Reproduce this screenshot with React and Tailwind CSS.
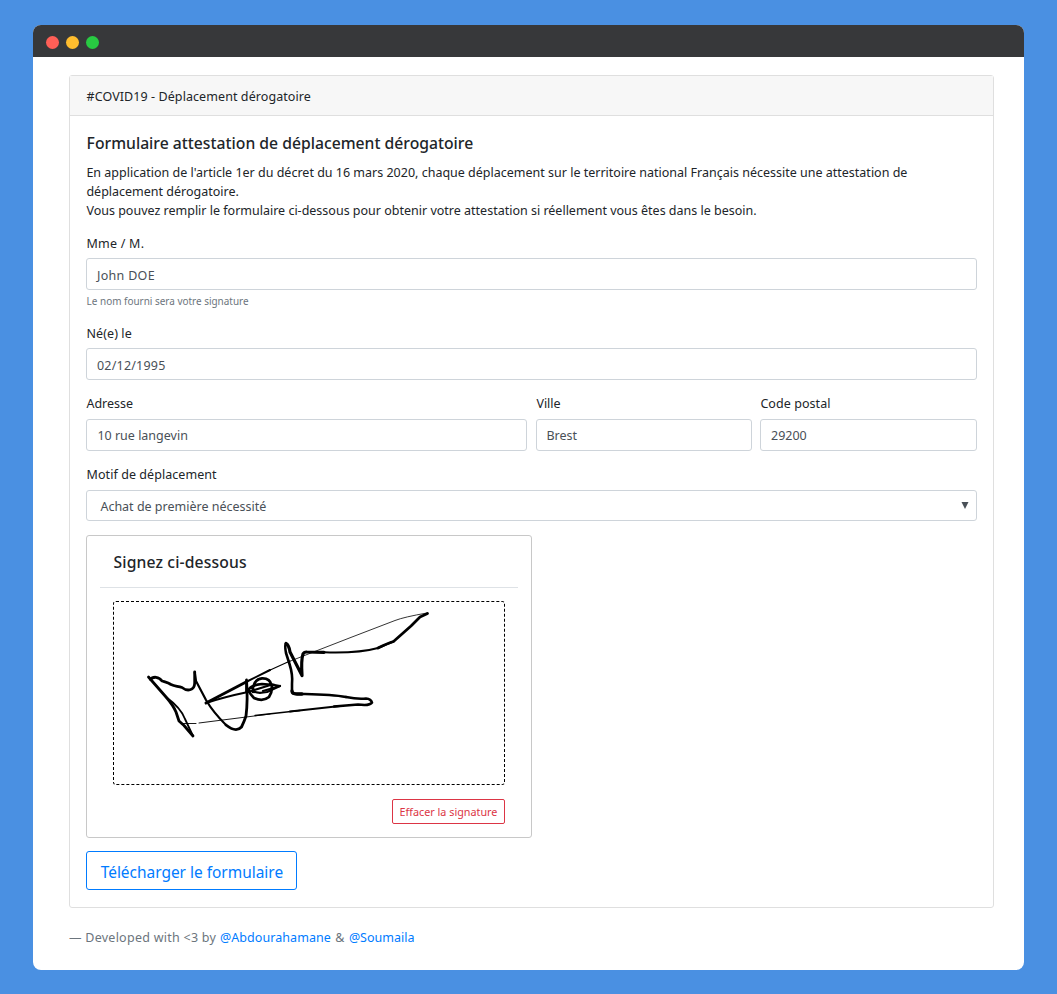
function Field({ label, value, hint, className = "", labelClass = "", valueClass = "" }) {
  return (
    <div className={className}>
      <label className={"block h-[19px] pl-[0.4px] leading-[19px] " + labelClass}>{label}</label>
      <div className="mt-[6px] flex h-8 items-center rounded-[3px] border border-[#ced4da] px-[10px] text-[#495057]">
        <span className={valueClass}>{value}</span>
      </div>
      {hint && <small className="mt-[3px] block h-4 pl-[0.6px] text-[9.950px] leading-4 text-[#6c757d]">{hint}</small>}
    </div>
  );
}

function Signature() {
  return (
    <svg className="block h-full w-full" viewBox="114 602 390 182" fill="none" stroke="#000" strokeLinecap="round" strokeLinejoin="round">
      <g strokeWidth="2.600">
        <path d="M150.500 679.500Q152 677 156 677.300Q160 677.800 162 681C165 682 168 682.500 171 684.500C175 686.500 178 686 182 687.500C187 691.500 194.500 691 194.700 683V672" strokeWidth="2.800" />
        <path d="M148.500 677L166 697Q173 705 176 712L179 721L184 725.500L193 736" strokeWidth="2.800" />
        <path d="M194.700 672L196 681L206 700Q213 712 226 725" strokeWidth="2.200" />
        <path d="M226 725Q236 733 241.500 727Q244 722 246 716Q248 700 246.500 680V692" strokeWidth="2.800" />
        <path d="M206 703L247 681.500" strokeWidth="2.900" />
        <path d="M206 703Q224 697 248 692L272 684.500L280 686L263 691" strokeWidth="2.200" />
        <path d="M253 692V687Q255 679 262 678.300Q270 678 271.500 685Q273 691 269 697Q263 702 254 698Q248 692 249 689Q252 685 262 684L274 685" strokeWidth="2.700" />
        <path d="M253 691Q257 694 267 692L280 686" strokeWidth="2.200" />
        <path d="M286 643.500Q284.500 645 286 653L289.500 664Q293 675 292 684V691Q292 694 297 694L305 694Q333 694.500 346 697" />
        <path d="M292 691Q292 694 297 694L302 694" strokeWidth="3.300" />
        <path d="M346 697Q358 699.500 366 698.500Q371 699 372 702.500Q370 706 358 704.500L334 706.500" />
        <path d="M286 643.500Q289 645 290 652L302 675.500Q301 660 303 654Q304 651.800 307 652L324 652.300" strokeWidth="3.200" />
        <path d="M378 648Q388 643 393.500 641.500L411 626L420 617L427.500 613.500" strokeWidth="2.800" />
      </g>
      <path d="M324 652.300Q358 653.500 378 648L393.500 641.500" strokeWidth="1.900" />
      <path d="M166 697Q181 708 185 719L193 736" strokeWidth="1.800" />
      <path d="M247 681.500L270 670" strokeWidth="2" />
      <path d="M268 671L290 661" strokeWidth="1.200" />
      <path d="M288 662L316 651L352 637L395 620.500Q404 617 427 613" strokeWidth=".8" />
      <path d="M182 723.500H196M199 723L270 714" strokeWidth=".9" />
      <path d="M255 715.500L300 710.500" strokeWidth="1.300" />
      <path d="M290 711.500L340 706" strokeWidth="2" />
    </svg>
  );
}

export default function App() {
  return (
    <div className="h-[994px] bg-[#4a90e2] px-[33px] pt-[25px] font-['Noto_Sans',sans-serif] text-[12.500px] text-[#212529]">
      <main className="h-[945px] overflow-hidden rounded-[8px] bg-white">
        <div className="flex h-8 items-center gap-[7px] bg-[#37383a] pt-[2px] pl-[13.400px]">
          <i className="size-[13px] rounded-full bg-[#ff5f57]" />
          <i className="size-[13px] rounded-full bg-[#ffbd2e]" />
          <i className="size-[13px] rounded-full bg-[#28ca42]" />
        </div>
        <div className="pt-[18px] pr-[30px] pl-9">
          <section className="h-[833px] w-[925px] rounded-[3px] border border-[#dfdfdf]">
            <header className="flex h-10 items-center border-b border-[#dfdfdf] bg-[#f7f7f7] pt-[3px] pl-[16.600px] tracking-[0.08px]">#COVID19 - Déplacement dérogatoire</header>
            <div className="px-4 pt-[15px]">
              <h1 className="h-6 pl-[0.6px] text-[15.730px] leading-6 font-medium">Formulaire attestation de déplacement dérogatoire</h1>
              <p className="mt-2 pl-[0.4px] leading-[19px] whitespace-nowrap">
                En application de l'article 1er du décret du 16 mars 2020, chaque déplacement sur le territoire national Français nécessite une attestation de<br />
                déplacement dérogatoire.<br />
                Vous pouvez remplir le formulaire ci-dessous pour obtenir votre attestation si réellement vous êtes dans le besoin.
              </p>
              <Field className="mt-[14px] -mb-px" label="Mme / M." value="John DOE" hint="Le nom fourni sera votre signature" labelClass="tracking-[0.25px] -mb-px" valueClass="tracking-[0.3px] pt-[4px]" />
              <Field className="mt-4 -mb-px" label="Né(e) le" value="02/12/1995" labelClass="tracking-[0.1px] -mb-px" valueClass="tracking-[0.2px] pt-[4px]" />
              <div className="mt-[15px] flex">
                <Field className="w-[441px]" label="Adresse" value="10 rue langevin" valueClass="pt-[2px] pl-[0.4px]" />
                <Field className="ml-[9px] w-[216px]" label="Ville" value="Brest" valueClass="pt-[2px] -ml-[0.6px]" />
                <Field className="ml-2 w-[217px]" label="Code postal" value="29200" labelClass="tracking-[0.06px]" valueClass="pt-[2px]" />
              </div>
              <label className="mt-[14px] block h-[19px] pl-[0.6px] leading-[19px] tracking-[0.06px]">Motif de déplacement</label>
              <div className="mt-[6px] flex h-[31px] items-center justify-between rounded-[3px] border border-[#ced4da] pr-[7px] pl-[13.400px] text-[#495057]">
                <span className="pt-[3px]">Achat de première nécessité</span>
                <svg className="h-[7px] w-[8px]" viewBox="0 0 8 7"><path d="M.5 0H7.500L4 7Z" fill="#495057" /></svg>
              </div>
              <div className="mt-[14px] h-[303px] w-[446px] rounded-[3px] border border-[#c8c8c8] px-[13px]">
                <h2 className="h-[52px] border-b border-[#dee2e6] pt-[14px] pl-[13.500px] text-[15.700px] leading-6 font-medium tracking-[0.14px]">Signez ci-dessous</h2>
                <div className="mt-[13px] ml-[13px] h-[184px] w-[392px] rounded-[3px] border border-dashed border-black"><Signature /></div>
                <button className="mt-[14px] ml-[292px] block h-[25px] w-[113px] rounded-[2px] border border-[#dc3545] text-[10.800px] leading-[24px] whitespace-nowrap text-[#dc3545]">Effacer la signature</button>
              </div>
              <button className="mt-[13px] block h-[39px] w-[211px] rounded-[3px] border border-[#007bff] pl-[0.8px] text-[15.450px] leading-[40px] whitespace-nowrap text-[#007bff]">Télécharger le formulaire</button>
            </div>
          </section>
          <footer className="mt-5 flex leading-[19px] whitespace-pre text-[#6c757d]"><span className="w-[151px] tracking-[0.26px]">— Developed with &lt;3 by </span><a className="tracking-[0.06px] text-[#007bff]">@Abdourahamane</a><span className="w-[18px] text-center">&amp;</span><a className="text-[#007bff]">@Soumaila</a></footer>
        </div>
      </main>
    </div>
  );
}
